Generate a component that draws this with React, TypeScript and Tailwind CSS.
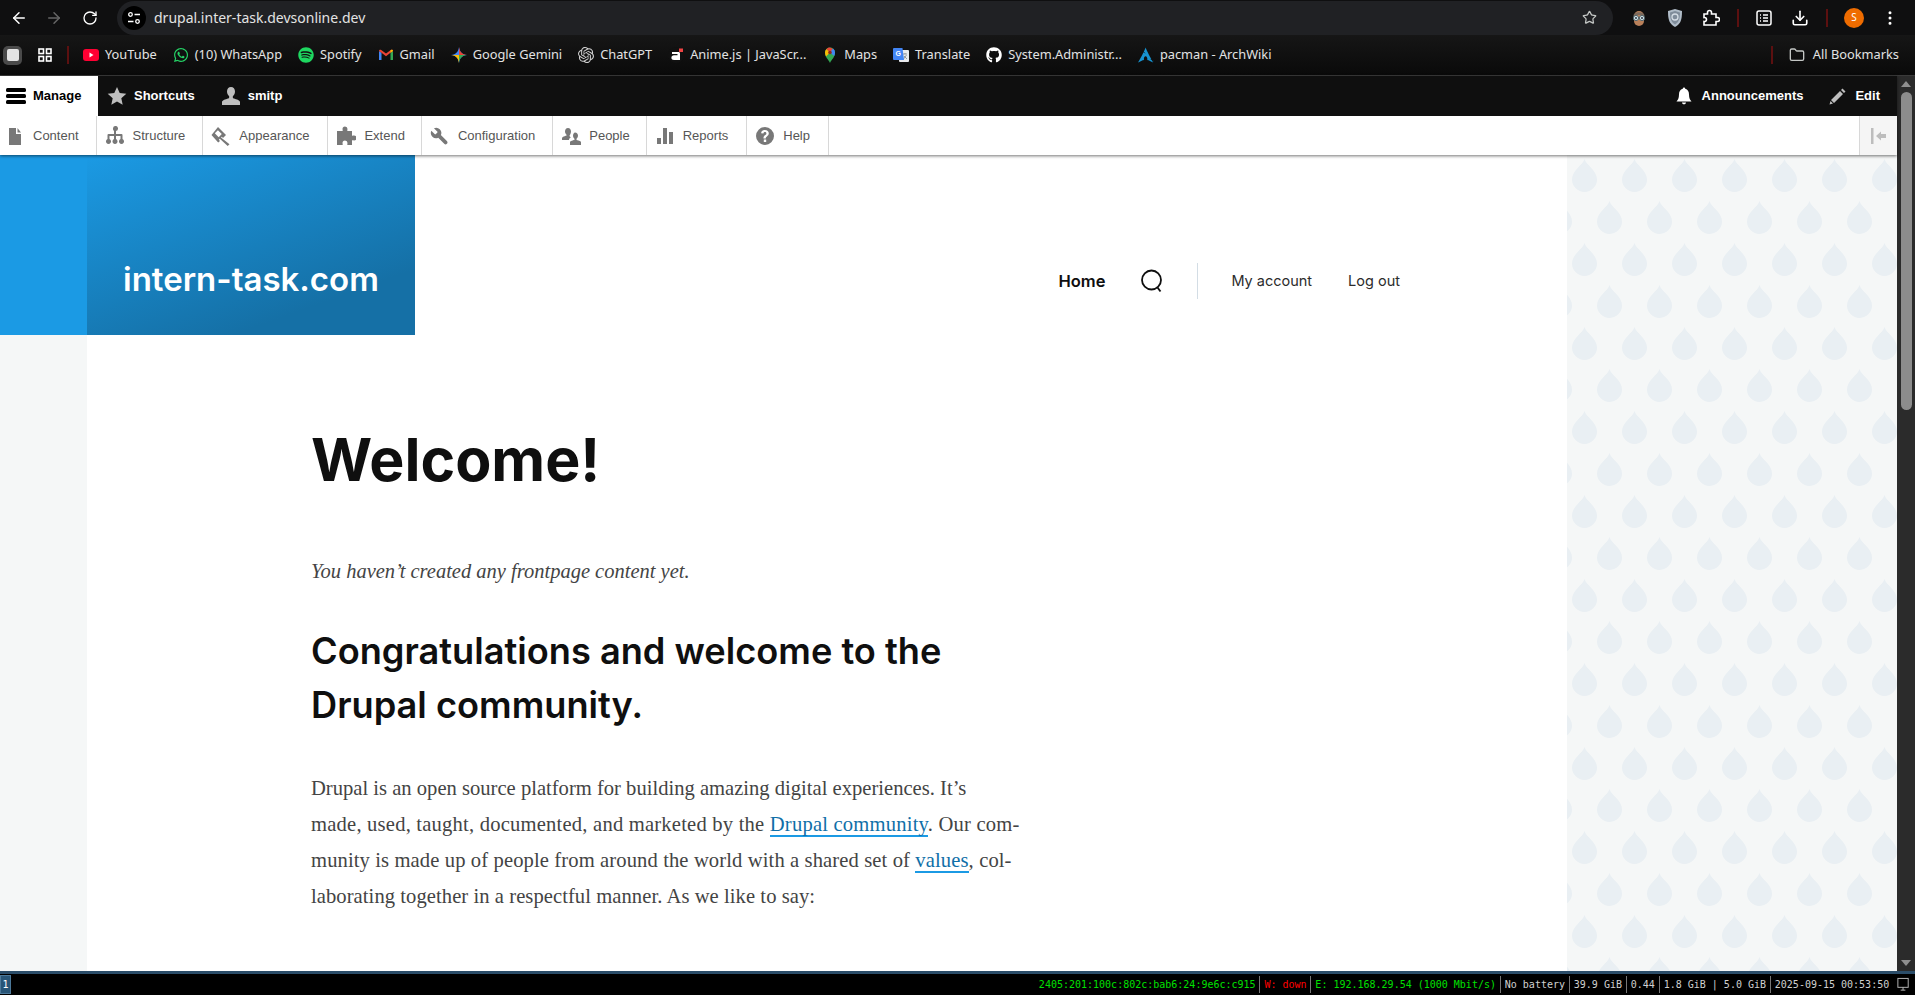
import React from "react";
import {
  ArrowLeft,
  ArrowRight,
  RotateCw,
  Star,
  Folder,
  Download,
  EllipsisVertical,
} from "lucide-react";
import { FaWhatsapp, FaSpotify, FaGithub } from "react-icons/fa";
import { SiOpenai, SiArchlinux } from "react-icons/si";

const YouTubeIcon = () => (
  <svg viewBox="0 0 16 16" className="h-4 w-4">
    <rect x="0" y="2" width="16" height="12" rx="3" fill="#ff0033" />
    <path d="M6.5 5.5v5l4-2.5z" fill="#fff" />
  </svg>
);

const GmailIcon = () => (
  <svg viewBox="0 0 16 16" className="h-4 w-4">
    <path d="M1 13V4l2.5 1.8V13z" fill="#4285f4" />
    <path d="M12.5 13V5.8L15 4v9z" fill="#34a853" />
    <path d="M1 4c0-1.2 1.3-1.7 2.2-1L8 6.6 12.8 3c.9-.7 2.2-.2 2.2 1l-2.5 1.8L8 9.2 3.5 5.8z" fill="#ea4335" />
    <path d="M12.5 5.8 15 4c0-1.2-1.3-1.7-2.2-1l-.3.2z" fill="#fbbc04" />
  </svg>
);

const GeminiIcon = () => (
  <svg viewBox="0 0 16 16" className="h-4 w-4">
    <path d="M8 0C8.5 4.5 11 7.5 16 8 11 8.5 8.5 11.5 8 16 7.5 11.5 5 8.5 0 8 5 7.5 7.5 4.5 8 0z" fill="#4285f4" />
    <path d="M8 0C8.5 4.5 11 7.5 16 8H8z" fill="#ea4335" />
    <path d="M8 16C7.5 11.5 5 8.5 0 8h8z" fill="#fbbc04" />
    <path d="M8 8h8c-5 .5-7.5 3.5-8 8z" fill="#34a853" />
  </svg>
);

const AnimeIcon = () => (
  <svg viewBox="0 0 16 16" className="h-4 w-4">
    <circle cx="8" cy="8" r="8" fill="#111" />
    <path d="M4 5h6.5c.8 0 1.5.7 1.5 1.5V13H6c-1.6 0-2.6-1-2.6-2.3S4.4 8.3 6 8.3h3.5V7H4z" fill="#fff" />
    <rect x="11" y="1.5" width="4" height="3.5" fill="#ef4444" />
  </svg>
);

const MapsIcon = () => (
  <svg viewBox="0 0 16 16" className="h-4 w-4">
    <path d="M8 16C6.8 12.8 3 10.5 3 5.5a5 5 0 0 1 10 0C13 10.5 9.2 12.8 8 16z" fill="#34a853" />
    <path d="M3 5.5a5 5 0 0 1 1.5-3.6L8 5.5 4 9.5C3.4 8.3 3 7 3 5.5z" fill="#fbbc04" />
    <path d="M4.5 1.9A5 5 0 0 1 8 .5l3 1.5L8 5.5z" fill="#ea4335" />
    <path d="M11 1.6a5 5 0 0 1 2 3.9c0 1.3-.3 2.4-.8 3.4L8 5.5z" fill="#4285f4" />
    <circle cx="8" cy="5.5" r="1.8" fill="#8f2a1e" />
  </svg>
);

const TranslateIcon = () => (
  <svg viewBox="0 0 16 16" className="h-4 w-4">
    <rect x="6" y="3" width="10" height="12" rx="1" fill="#e8eaed" />
    <path d="M10 7h4M12 6v1M10.5 12l3-4M11 9l3 3" stroke="#80868b" strokeWidth="0.8" fill="none" />
    <path d="M1 1h8.5l1.5 12H1a1 1 0 0 1-1-1V2a1 1 0 0 1 1-1z" fill="#4285f4" />
    <text x="2.5" y="9" fontSize="7" fontWeight="700" fill="#fff" fontFamily="Liberation Sans, sans-serif">G</text>
  </svg>
);

const ProfileExtIcon = () => (
  <svg viewBox="0 0 18 18" className="h-[18px] w-[18px]">
    <path d="M4 7a5 5 0 0 1 10 0v5a5 5 0 0 1-10 0z" fill="#b9805a" />
    <path d="M3.5 7c0-5 11-5 11 0-3-1.5-8-1.5-11 0z" fill="#7d6a5c" />
    <circle cx="6" cy="9" r="2.6" fill="#cfe4e8" stroke="#50626a" />
    <circle cx="12" cy="9" r="2.6" fill="#cfe4e8" stroke="#50626a" />
    <circle cx="6" cy="9" r="0.9" fill="#223" />
    <circle cx="12" cy="9" r="0.9" fill="#223" />
  </svg>
);

const ShieldIcon = () => (
  <svg viewBox="0 0 18 18" className="h-[18px] w-[18px]">
    <path d="M9 0l7 2c0 8-1 13-7 16C3 15 2 10 2 2z" fill="#b0bcc8" />
    <path d="M9 2l5 1.5C14 9.5 13 13 9 15.5 5 13 4 9.5 4 3.5z" fill="#7f8c9a" />
    <circle cx="9" cy="8" r="3" fill="none" stroke="#d5dde5" strokeWidth="1.3" />
  </svg>
);

const ExtensionIcon = () => (
  <svg viewBox="0 0 18 18" className="h-[18px] w-[18px]" fill="none" stroke="#fff" strokeWidth="1.6">
    <path d="M2 5h3.5V3.5a2 2 0 0 1 4 0V5H14v3.5h1.5a2 2 0 0 1 0 4H14V16H2v-3.5c1.5.2 2.5-.8 2.5-2S3.5 8.3 2 8.5z" />
  </svg>
);

const ReadingIcon = () => (
  <svg viewBox="0 0 18 18" className="h-[18px] w-[18px]" fill="none" stroke="#fff" strokeWidth="1.5">
    <rect x="2" y="2" width="14" height="14" rx="2" />
    <path d="M5 6h1M8 6h5M5 9h1M8 9h5M5 12h1M8 12h5" />
  </svg>
);

/* Drupal admin toolbar icons */
const ToolbarIcon = ({ children, fill = "#787878" }: { children: React.ReactNode; fill?: string }) => (
  <svg viewBox="0 0 20 20" className="h-5 w-5 shrink-0" fill={fill}>
    {children}
  </svg>
);

const tabs = [
  {
    label: "Content",
    pad: "pl-[5px] pr-[17px]",
    icon: <path d="M4 2h7v6h5v11H4zM12.5 2 16 6.5h-3.5z" />,
  },
  {
    label: "Structure",
    pad: "pl-2 pr-[17px]",
    icon: (
      <path d="M8 2.5a2.5 2.5 0 1 1 3 2.4V8h5.5a1 1 0 0 1 1 1v4.1a2.5 2.5 0 1 1-2 0V10H11v3.1a2.5 2.5 0 1 1-2 0V10H4.5v3.1a2.5 2.5 0 1 1-2 0V9a1 1 0 0 1 1-1H9V4.9A2.5 2.5 0 0 1 8 2.5z" />
    ),
  },
  {
    label: "Appearance",
    pad: "pl-2 pr-[18px]",
    icon: (
      <path d="M7 1 15 9 12 12 10.8 10.8 10 11.6 18.5 18.2 16.7 20 8.8 12.8 7.8 13.8 9 15 7.2 16.6 .5 9zM6.9 4.2 3.8 7.3 7.7 11.2 10.8 8.1z" />
    ),
  },
  {
    label: "Extend",
    pad: "pl-2 pr-4",
    icon: (
      <path d="M1 5h5.5C7 4.5 6.5 4 6.5 3a2.5 2.5 0 0 1 5 0c0 1-.5 1.5 0 2H16v4.5c.5.5 1 0 2 0a2.5 2.5 0 0 1 0 5c-1 0-1.5-.5-2 0V19h-4.5c-.5-.5 0-1.2 0-2a2.5 2.5 0 0 0-5 0c0 .8.5 1.5 0 2H1z" />
    ),
  },
  {
    label: "Configuration",
    pad: "pl-2 pr-[17px]",
    icon: (
      <path
        transform="scale(-0.87 0.87) translate(-23 0)"
        d="M14.7 6.3a1 1 0 0 0 0 1.4l1.6 1.6a1 1 0 0 0 1.4 0l3.77-3.77a6 6 0 0 1-7.94 7.94l-6.91 6.91a2.12 2.12 0 0 1-3-3l6.91-6.91a6 6 0 0 1 7.94-7.94l-3.76 3.76z"
      />
    ),
  },
  {
    label: "People",
    pad: "pl-2 pr-4",
    icon: (
      <path d="M7 2c1.9 0 3 1.6 3 3.5S9 9 8.5 9.8c0 .8.5 1 1.5 1.4-1.3.6-2 1.5-2 2.8H1v-1.8c0-1.5 3.5-2 4.3-2.4.3-.3.3-1 .1-1.3C4.7 7.8 4 6.8 4 5.5 4 3.6 5.1 2 7 2zm7 4.5c1.9 0 3 1.5 3 3.3 0 1.2-.7 2.2-1.4 2.9-.2.3-.2 1 .1 1.3.8.4 4.3.8 4.3 2.3V19H9v-2.7c0-1.5 3.5-1.9 4.3-2.3.3-.3.3-1 .1-1.3C12.7 12 12 11 12 9.8c0-1.8 1.1-3.3 2-3.3z" />
    ),
  },
  {
    label: "Reports",
    pad: "pl-2 pr-[18px]",
    icon: (
      <>
        <rect x="2" y="12" width="4" height="6" />
        <rect x="8" y="2" width="4" height="16" />
        <rect x="14" y="6" width="4" height="12" />
      </>
    ),
  },
  {
    label: "Help",
    pad: "pl-2 pr-[18px]",
    icon: (
      <path
        fillRule="evenodd"
        d="M10 1a9 9 0 1 1 0 18 9 9 0 0 1 0-18zM8.8 13.6v2.3h2.4v-2.3zM10 4C7.8 4 6.3 5.3 6.1 7.3l2.3.3c.1-1 .7-1.5 1.5-1.5s1.5.5 1.5 1.3c0 .7-.5 1.1-1.1 1.6-1 .8-1.8 1.5-1.8 3v.6h2.3v-.4c0-.9.4-1.2 1.1-1.8.9-.7 1.9-1.5 1.9-3.1C13.8 5.4 12.2 4 10 4z"
      />
    ),
  },
];

const bookmarks: { icon: React.ReactNode; label: string }[] = [
  { icon: <YouTubeIcon />, label: "YouTube" },
  { icon: <FaWhatsapp className="h-4 w-4 text-[#25d366]" />, label: "(10) WhatsApp" },
  { icon: <FaSpotify className="h-4 w-4 text-[#1ed760]" />, label: "Spotify" },
  { icon: <GmailIcon />, label: "Gmail" },
  { icon: <GeminiIcon />, label: "Google Gemini" },
  { icon: <SiOpenai className="h-4 w-4 text-[#d0d0d0]" />, label: "ChatGPT" },
  { icon: <AnimeIcon />, label: "Anime.js | JavaScr..." },
  { icon: <MapsIcon />, label: "Maps" },
  { icon: <TranslateIcon />, label: "Translate" },
  { icon: <FaGithub className="h-4 w-4 text-white" />, label: "System.Administr..." },
  { icon: <SiArchlinux className="h-4 w-4 text-[#1793d1]" />, label: "pacman - ArchWiki" },
];

const BrowserChrome = () => (
  <div className="shrink-0 bg-[#0f0f10] font-['Noto_Sans',sans-serif] text-[#e3e3e3]">
    {/* Address row */}
    <div className="flex h-[35px] items-center">
      <div className="flex w-[117px] items-center pl-[10px] pr-2">
        <ArrowLeft className="h-[18px] w-[18px] text-white" />
        <ArrowRight className="ml-[17px] h-[18px] w-[18px] text-[#666]" />
        <RotateCw className="ml-[19px] h-4 w-4 text-white" />
      </div>
      <div className="flex h-[34px] w-[1496px] items-center rounded-full bg-[#202124]">
        <div className="ml-[5px] flex h-6 w-6 items-center justify-center rounded-full bg-black">
          <svg viewBox="0 0 14 14" className="h-[14px] w-[14px]" fill="none" stroke="#fff" strokeWidth="1.3">
            <circle cx="3.5" cy="3.5" r="1.8" />
            <path d="M7.5 3.5H13M1 10.5h5.5" />
            <circle cx="10.5" cy="10.5" r="1.8" />
          </svg>
        </div>
        <span className="ml-[8px] text-[14px] leading-none">drupal.inter-task.devsonline.dev</span>
        <Star className="ml-auto mr-[16px] h-[15px] w-[15px] text-[#c4c7c5]" />
      </div>
      <div className="flex flex-1 items-center pl-[17px]">
        <ProfileExtIcon />
        <div className="ml-[18px]"><ShieldIcon /></div>
        <div className="ml-[18px]"><ExtensionIcon /></div>
        <div className="ml-[17px] h-[18px] w-[2px] bg-[#5c1010]" />
        <div className="ml-[16px]"><ReadingIcon /></div>
        <Download className="ml-[18px] h-[18px] w-[18px] text-white" strokeWidth={2.2} />
        <div className="ml-[17px] h-[18px] w-[2px] bg-[#5c1010]" />
        <div className="ml-[16px] flex h-5 w-5 items-center justify-center rounded-full bg-[#ef6c00] text-[10px] text-white">S</div>
        <EllipsisVertical className="ml-[17px] h-[18px] w-[18px] text-white" />
      </div>
    </div>
    {/* Bookmarks row */}
    <div className="flex h-[41px] items-center border-b border-[#3a3a3a] bg-gradient-to-b from-[#161616] to-[#0a0a0a] text-[12.8px]">
      <div className="ml-[3px] flex h-[19px] w-[19px] items-center justify-center rounded-[5px] bg-[#4a4a4a]">
        <div className="h-3 w-3 rounded-[2px] bg-[#e4e4e4]" />
      </div>
      <svg viewBox="0 0 14 14" className="ml-[16px] h-[14px] w-[14px]" fill="none" stroke="#fff" strokeWidth="1.6">
        <rect x="1" y="1" width="4.5" height="4.5" />
        <rect x="8.5" y="1" width="4.5" height="4.5" />
        <rect x="1" y="8.5" width="4.5" height="4.5" />
        <rect x="8.5" y="8.5" width="4.5" height="4.5" />
      </svg>
      <div className="ml-[15px] h-[18px] w-[2px] bg-[#5c1010]" />
      <div className="ml-[14px] flex items-center gap-4">
        {bookmarks.map((b) => (
          <div key={b.label} className="flex items-center gap-[6px] whitespace-nowrap">
            {b.icon}
            <span>{b.label}</span>
          </div>
        ))}
      </div>
      <div className="ml-auto h-[18px] w-[2px] bg-[#5c1010]" />
      <div className="ml-4 mr-4 flex items-center gap-2 whitespace-nowrap">
        <Folder className="h-4 w-4 text-[#c4c7c5]" />
        <span>All Bookmarks</span>
      </div>
    </div>
  </div>
);

const DrupalToolbar = () => (
  <div className="relative z-10 shrink-0 font-['Liberation_Sans',sans-serif] shadow-[0_1px_3px_rgba(0,0,0,0.55)]">
    <div className="flex h-10 items-center bg-[#0f0f0f] text-[13px] font-bold text-white">
      <div className="flex h-full w-[98px] items-center gap-[7px] bg-white pl-[6px] text-black">
        <svg viewBox="0 0 20 20" className="h-5 w-5" fill="#000">
          <rect x="0" y="2" width="20" height="4" rx="1.5" />
          <rect x="0" y="8" width="20" height="4" rx="1.5" />
          <rect x="0" y="14" width="20" height="4" rx="1.5" />
        </svg>
        Manage
      </div>
      <div className="ml-[9px] flex items-center gap-[7px]">
        <ToolbarIcon fill="#bebebe">
          <path d="M10 1l2.7 6.1 6.6.7-5 4.4 1.4 6.5L10 15.4 4.3 18.7l1.4-6.5-5-4.4 6.6-.7z" />
        </ToolbarIcon>
        Shortcuts
      </div>
      <div className="ml-[26px] flex items-center gap-[7px]">
        <ToolbarIcon fill="#bebebe">
          <path d="M10 1c2.5 0 4 2.1 4 4.5 0 2-1 3.5-2 4.5-.3.5-.3 1.8.2 2.2C13.500 13 19 13.800 19 16v3H1v-3c0-2.200 5.500-3 6.800-3.800.5-.4.5-1.700.2-2.200-1-1-2-2.500-2-4.500C6 3.100 7.500 1 10 1z" />
        </ToolbarIcon>
        smitp
      </div>
      <div className="ml-auto flex items-center gap-[8px]">
        <ToolbarIcon fill="#fff">
          <path d="M10 1.5c.8 0 1.2.6 1.2 1.3C14 3.5 15 6 15 8.5c0 4 1.2 5.5 2.5 7h-15C3.8 14 5 12.5 5 8.5 5 6 6 3.5 8.8 2.8c0-.7.4-1.3 1.2-1.3zM8 16.5h4c0 1-.9 1.8-2 1.8s-2-.8-2-1.8z" />
        </ToolbarIcon>
        Announcements
      </div>
      <div className="ml-[25px] mr-[17px] flex items-center gap-[7px]">
        <ToolbarIcon fill="#bebebe">
          <path d="M14.5 2.5l3 3-1.5 1.5-3-3zM12 5l3 3-9 9-3-3zM2.5 15l2.5 2.5-3.500 1z" />
        </ToolbarIcon>
        Edit
      </div>
    </div>
    <div className="flex h-[39px] items-stretch bg-white text-[13px] text-[#565656]">
      {tabs.map((t) => (
        <div key={t.label} className={`flex items-center gap-2 border-r border-[#d8d8d8] ${t.pad}`}>
          <ToolbarIcon>{t.icon}</ToolbarIcon>
          {t.label}
        </div>
      ))}
      <div className="ml-auto flex w-[38px] items-center justify-center border-l border-[#d8d8d8] bg-[#f5f5f5]">
        <svg viewBox="0 0 20 20" className="h-5 w-5" fill="#bdbdbd">
          <rect x="2" y="2" width="2.5" height="16" />
          <path d="M7 10l5-4.5V8h5v4h-5v2.5z" />
        </svg>
      </div>
    </div>
  </div>
);

const DROP_PATH = "M17.5 0C19 6 30 11 30 20.5a12.5 12.5 0 0 1-25 0C5 11 16 6 17.5 0z";

const DropColumn = () => (
  <div className="w-[330px] shrink-0 bg-[#f5f7f7]">
    <svg className="h-full w-full">
      <defs>
        <pattern id="drops" x="0" y="4" width="50" height="84" patternUnits="userSpaceOnUse">
          <path d={DROP_PATH} fill="#e9eff3" />
          <path transform="translate(25 42)" d={DROP_PATH} fill="#e9eff3" />
          <path transform="translate(-25 42)" d={DROP_PATH} fill="#e9eff3" />
        </pattern>
      </defs>
      <rect width="100%" height="100%" fill="url(#drops)" />
    </svg>
  </div>
);

const SiteHeader = () => (
  <div className="flex h-[180px] font-['Inter',sans-serif]">
    <div className="flex h-full w-[328px] items-end bg-[linear-gradient(160deg,#1b9ae4_0%,#1570a6_78%)] pb-[39px] pl-[36px] text-[33px] font-semibold leading-none text-white">
      intern-task.com
    </div>
    <div className="ml-auto mt-[108px] flex h-9 items-center pr-[167px] text-[#0f0f0f]">
      <span className="text-[16.5px] font-semibold">Home</span>
      <svg viewBox="0 0 24 24" className="ml-[35px] h-6 w-6" fill="none" stroke="#0f0f0f" strokeWidth="1.8">
        <circle cx="11.5" cy="11" r="9.5" />
        <path d="M17.5 18.5l3 4" />
      </svg>
      <div className="ml-[33px] h-9 w-px bg-[#d3dde5]" />
      <span className="ml-[33px] text-[14.5px] text-[#2c2c2c]">My account</span>
      <span className="ml-[36px] text-[14.5px] text-[#2c2c2c]">Log out</span>
    </div>
  </div>
);

const Content = () => (
  <div className="pl-[224px]">
    <h1 className="mt-[93px] font-['Inter',sans-serif] text-[59px] font-bold leading-[64px] text-[#0f0f0f]">Welcome!</h1>
    <p className="mt-[66px] font-['Liberation_Serif',serif] text-[20.5px] italic leading-[27px] text-[#444]">
      You haven’t created any frontpage content yet.
    </p>
    <h2 className="mt-[39px] w-[720px] font-['Inter',sans-serif] text-[36.2px] font-semibold leading-[54px] text-[#0f0f0f]">
      Congratulations and welcome to the
      <br />
      Drupal community.
    </h2>
    <div className="mt-[38px] whitespace-nowrap font-['Liberation_Serif',serif] text-[20.6px] leading-[36px] text-[#444]">
      <p>Drupal is an open source platform for building amazing digital experiences. It’s</p>
      <p className="tracking-[0.2px]">
        made, used, taught, documented, and marketed by the{" "}
        <span className="border-b-2 border-[#1b9ae4] text-[#0f6fa8]">Drupal community</span>. Our com-
      </p>
      <p className="tracking-[0.11px]">
        munity is made up of people from around the world with a shared set of{" "}
        <span className="border-b-2 border-[#1b9ae4] text-[#0f6fa8]">values</span>, col-
      </p>
      <p className="tracking-[0.06px]">laborating together in a respectful manner. As we like to say:</p>
    </div>
  </div>
);

const Scrollbar = () => (
  <div className="flex w-[18px] shrink-0 flex-col items-center bg-[#2b2b2b] py-[5px]">
    <div className="h-0 w-0 border-x-[5px] border-b-[6px] border-x-transparent border-b-[#8f8f8f]" />
    <div className="mt-[5px] h-[318px] w-[11px] rounded-full bg-[#8c8c8c]" />
    <div className="mt-auto h-0 w-0 border-x-[5px] border-t-[6px] border-x-transparent border-t-[#8f8f8f]" />
  </div>
);

const statusItems: { text: string; color: string }[] = [
  { text: "2405:201:100c:802c:bab6:24:9e6c:c915", color: "text-[#00e000]" },
  { text: "W: down", color: "text-[#ff0000]" },
  { text: "E: 192.168.29.54 (1000 Mbit/s)", color: "text-[#00e000]" },
  { text: "No battery", color: "text-[#d0d0d0]" },
  { text: "39.9 GiB", color: "text-[#d0d0d0]" },
  { text: "0.44", color: "text-[#d0d0d0]" },
  { text: "1.8 GiB | 5.0 GiB", color: "text-[#d0d0d0]" },
  { text: "2025-09-15 00:53:50", color: "text-[#d0d0d0]" },
];

const StatusBar = () => (
  <div className="flex h-6 shrink-0 items-center border-t-[3px] border-[#2b4d69] bg-black font-['DejaVu_Sans_Mono',monospace] text-[10px] leading-none">
    <div className="flex h-[19px] w-[11px] items-center justify-center border border-[#4c7899] bg-[#285577] text-white">1</div>
    <div className="ml-auto flex h-[17px] items-stretch">
      {statusItems.map((s, i) => (
        <div
          key={s.text}
          className={`flex items-center whitespace-pre pl-[4px] pr-[3.8px] ${i > 0 ? "border-l border-[#777]" : ""} ${s.color}`}
        >
          {s.text}
        </div>
      ))}
    </div>
    <svg viewBox="0 0 16 16" className="ml-[3px] mr-[4px] h-[15px] w-[15px]" fill="none" stroke="#bbb">
      <rect x="2" y="1.5" width="11" height="9.5" />
      <path d="M5 14h5M7.5 11v3" />
    </svg>
  </div>
);

export default function App() {
  return (
    <div className="flex h-[995px] flex-col overflow-hidden bg-white">
      <BrowserChrome />
      <div className="flex min-h-0 flex-1">
        <div className="flex min-w-0 flex-1 flex-col">
          <DrupalToolbar />
          <div className="flex min-h-0 flex-1">
            <div className="flex w-[87px] shrink-0 flex-col bg-[#f5f7f7]">
              <div className="h-[180px] bg-[#1b9ae4]" />
            </div>
            <div className="min-w-0 flex-1 overflow-hidden bg-white">
              <SiteHeader />
              <Content />
            </div>
            <DropColumn />
          </div>
        </div>
        <Scrollbar />
      </div>
      <StatusBar />
    </div>
  );
}
